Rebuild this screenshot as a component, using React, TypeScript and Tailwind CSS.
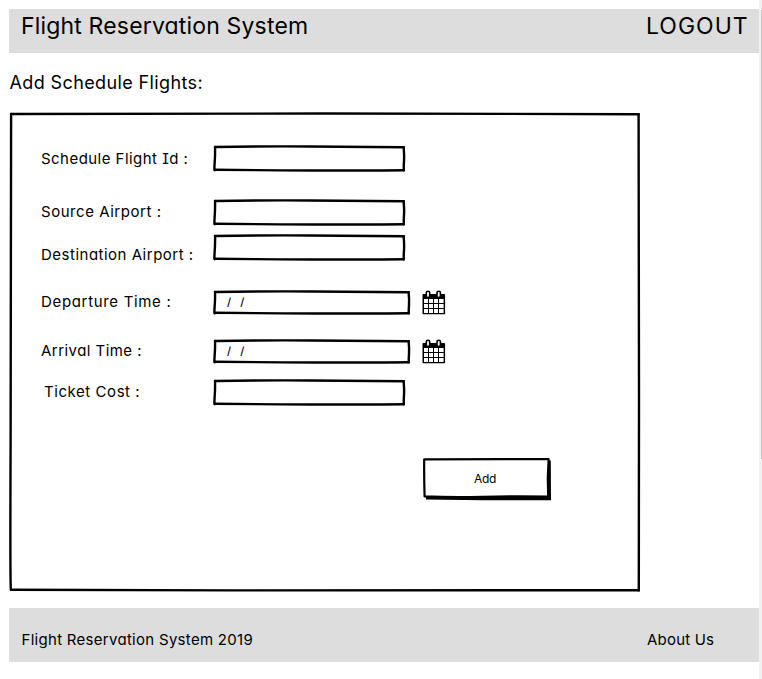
import React from "react";

const text =
  "font-['Inter','Lato',sans-serif] [font-feature-settings:'cv11','cv08'] whitespace-pre text-black leading-none";

/** Hand-drawn rectangle outline that fills its positioned parent. */
function SketchFrame({ w, h }: { w: number; h: number }) {
  return (
    <svg
      className="pointer-events-none absolute inset-0"
      width={w}
      height={h}
      viewBox={`0 0 ${w} ${h}`}
      fill="none"
      stroke="#000"
      strokeLinecap="round"
      strokeLinejoin="round"
      strokeWidth="2.4"
    >
      <path d={`M2 2 Q${w * 0.25} 1.2 ${w * 0.5} 1.5 T${w - 2.2} 2.2`} />
      <path d={`M${w - 2.4} 2.2 Q${w - 1.6} ${h * 0.4} ${w - 2} ${h * 0.6} T${w - 2.2} ${h - 1.6}`} />
      <path d={`M${w - 2.2} ${h - 1.8} Q${w * 0.6} ${h - 1.2} ${w * 0.35} ${h - 1.6} T2 ${h - 2.3}`} />
      <path d={`M2.1 2 Q2.2 ${h * 0.4} 1.6 ${h * 0.7} T2 ${h - 2.3}`} />
    </svg>
  );
}

function Field() {
  return (
    <div className="relative h-[27px] w-[193px]">
      <SketchFrame w={193} h={27} />
    </div>
  );
}

function CalendarIcon() {
  return (
    <svg className="ml-[11px] block" width="24" height="25" viewBox="0 0 24 25">
      <rect x="0.5" y="4" width="22.6" height="20.2" rx="0.8" fill="#000" />
      <g fill="#fff">
        {[9, 14, 19].map((y) =>
          [2, 7, 12, 17].map((x) => (
            <rect key={`${x}-${y}`} x={x} y={y} width={x === 17 ? 4.6 : 4} height="4" />
          ))
        )}
      </g>
      <rect x="4.3" y="1.2" width="3.4" height="6.4" rx="1.6" fill="#fff" stroke="#000" strokeWidth="1.6" />
      <rect x="15" y="1.2" width="3.4" height="6.4" rx="1.6" fill="#fff" stroke="#000" strokeWidth="1.6" />
    </svg>
  );
}

function DateField() {
  return (
    <div className="flex">
      <div className="relative flex h-[25px] w-[198px] pl-[14px] pt-[7px]">
        <SketchFrame w={198} h={25} />
        <span className={`${text} text-[11px] font-medium tracking-[3.1px]`}>/ /</span>
      </div>
      <CalendarIcon />
    </div>
  );
}

function Row({
  label,
  labelClass,
  className,
  children,
}: {
  label: string;
  labelClass: string;
  className: string;
  children: React.ReactNode;
}) {
  return (
    <div className={`flex items-start ${className}`}>
      <div className="w-[173px] shrink-0 pl-px">
        <div className={`${text} text-[15px] ${labelClass}`}>{label}</div>
      </div>
      {children}
    </div>
  );
}

export default function App() {
  return (
    <div className="flex h-[679px] w-[762px] overflow-hidden bg-white">
      <div className="flex w-[759px] flex-col pl-[9px] pt-[9px]">
        <header className="flex h-11 items-start bg-[#dddddd] pt-[6px]">
          <div className={`${text} w-[625px] pl-[12px] text-[23px] tracking-[0.17px]`}>
            Flight Reservation System
          </div>
          <div className={`${text} pl-[12px] text-[23px] tracking-[1px]`}>LOGOUT</div>
        </header>

        <h1 className={`${text} mt-[21px] h-[18px] pl-[0.5px] text-[18px] tracking-[0.38px]`}>
          Add Schedule Flights:
        </h1>

        <main className="relative mt-[20px] h-[480px] w-[632px] pl-[31px] pt-[33px]">
          <SketchFrame w={632} h={480} />
          <Row className="h-[54px]" label="Schedule Flight Id :" labelClass="mt-[6px] tracking-[0.46px]">
            <Field />
          </Row>
          <Row className="h-[35px]" label="Source Airport :" labelClass="mt-[5px] tracking-[0.54px]">
            <Field />
          </Row>
          <Row className="h-14" label="Destination Airport :" labelClass="mt-[13px] tracking-[0.5px]">
            <Field />
          </Row>
          <Row className="h-[49px]" label="Departure Time :" labelClass="mt-[4px] tracking-[0.67px]">
            <DateField />
          </Row>
          <Row className="h-10" label="Arrival Time :" labelClass="mt-[4px] tracking-[0.45px]">
            <DateField />
          </Row>
          <Row className="h-[79px]" label="Ticket Cost :" labelClass="mt-[5px] ml-[3px] tracking-[0.56px]">
            <Field />
          </Row>
          <button className="relative ml-[383px] flex h-[43px] w-[129px] justify-center pr-[5px] pt-[15px]">
            <svg className="absolute inset-0" width="129" height="43" viewBox="0 0 129 43">
              <path d="M3 38 L3 41.6 L60 42.2 L128 42.2 L127.8 2.6 L125 2 L124 37Z" fill="#000" />
              <path
                d="M1.2 1.4 Q60 1 125.6 1.2 L124.8 20 L125.2 38.6 Q90 37.8 60 38.8 T1.6 38.4 Q1 20 1.2 1.4Z"
                fill="#fff"
                stroke="#000"
                strokeWidth="2.2"
                strokeLinejoin="round"
              />
            </svg>
            <span className={`${text} relative text-[12px] tracking-[-0.3px]`}>Add</span>
          </button>
        </main>

        <footer className="mt-[16px] flex h-[54px] items-start bg-[#dddddd] pt-6">
          <div className={`${text} w-[625px] pl-[12.5px] text-[15px] tracking-[0.29px]`}>
            Flight Reservation System 2019
          </div>
          <div className={`${text} pl-[13px] text-[15px] tracking-[0.2px]`}>About Us</div>
        </footer>
      </div>

      <div className="flex w-[3px] flex-col items-end bg-[#f1f1f1] pt-[10px]">
        <div className="h-[449px] w-px bg-[#c1c1c1]" />
      </div>
    </div>
  );
}
